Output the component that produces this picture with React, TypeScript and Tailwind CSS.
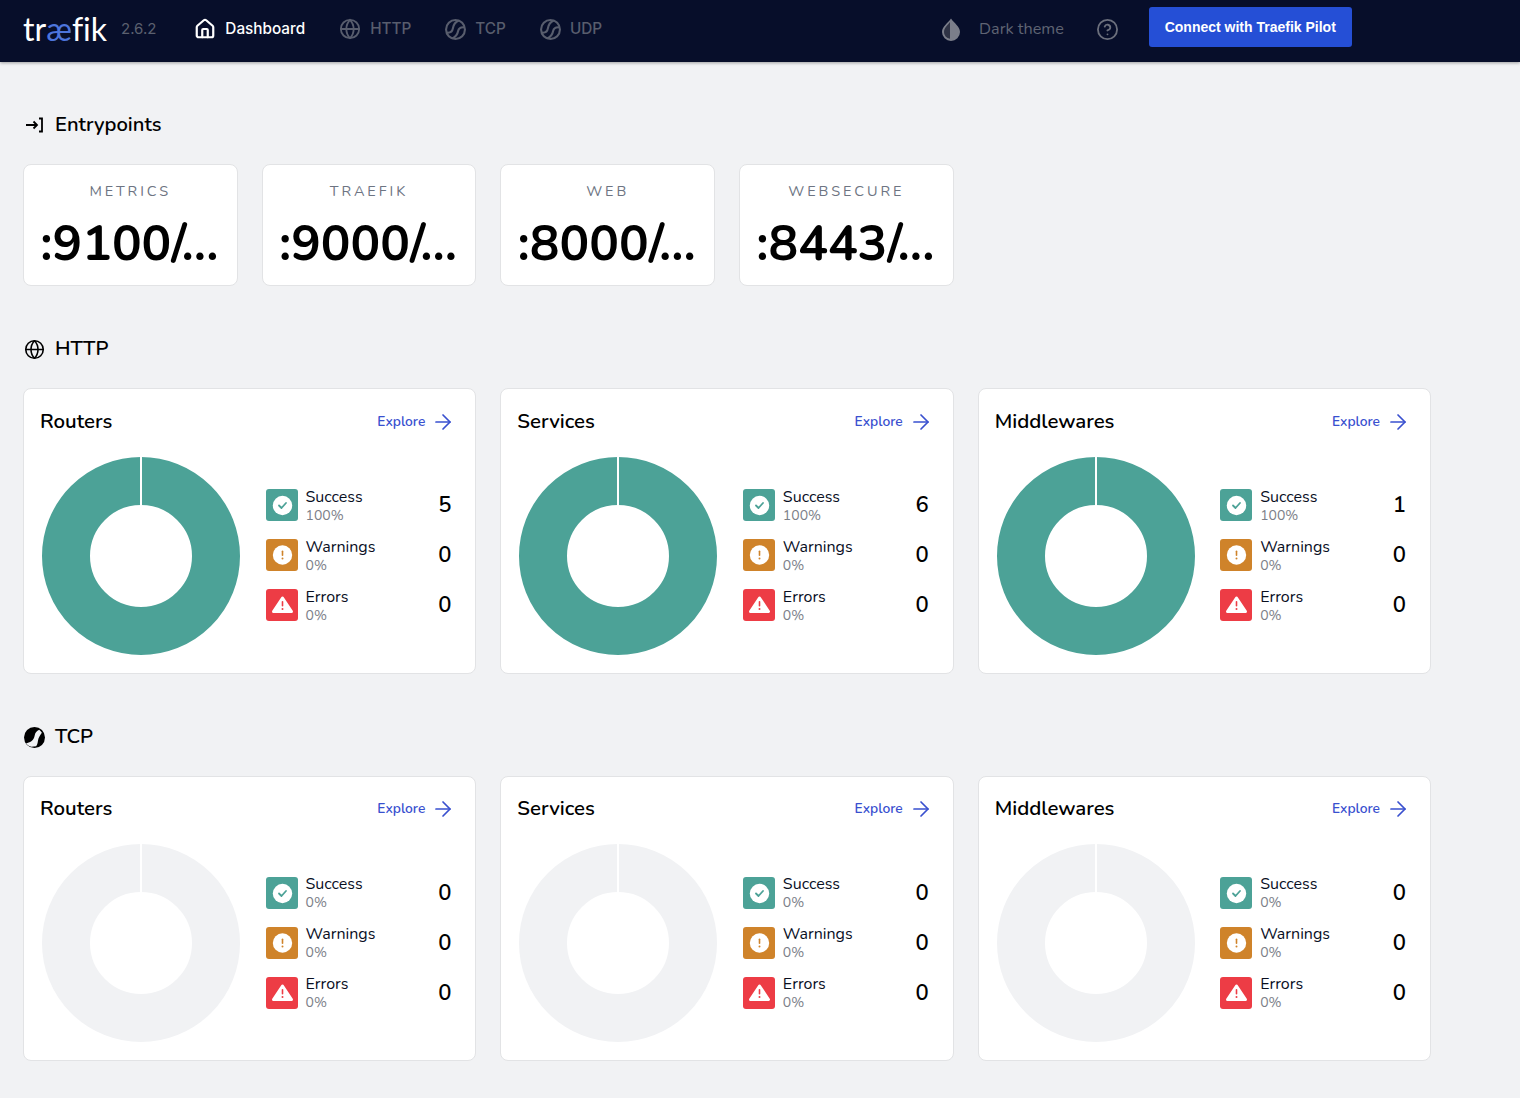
import { ArrowRight, CircleHelp, Globe, House } from "lucide-react";

const font = "font-['Nunito','Open_Sans','Noto_Sans',sans-serif]";

function WaveIcon({ className, solid }: { className?: string; solid?: boolean }) {
  if (solid) {
    return (
      <svg viewBox="0 0 20 20" className={className}>
        <circle cx="10" cy="10" r="10" fill="currentColor" />
        <path d="M14.500 2.500C12 3.800 10.800 5 10.300 7.500 9.700 10.500 8.500 12.500 7 13.500 5.500 14.500 3.500 15 2 15.500 3 17 5 18.300 7 18.800L11.500 18.300C12.500 17 13 15.500 13.300 13 13.700 10.500 14.800 8.500 17 5.500 16.500 4.500 15.500 3.200 14.500 2.500z" fill="#f1f2f4" />
      </svg>
    );
  }
  return (
    <svg viewBox="0 0 20 20" fill="none" stroke="currentColor" strokeWidth="2" className={className}>
      <circle cx="10" cy="10" r="9" />
      <path d="M1.500 13c3.500.5 5.500-1 6-4 .4-2.500 2-6 5.500-7.500" />
      <path d="M7 18.500c2.800-1.200 4.800-3.500 5.500-7 .5-2.500 3-4 6.500-3.500" />
    </svg>
  );
}

function EntryIcon() {
  return (
    <svg viewBox="0 0 20 20" fill="none" stroke="currentColor" strokeWidth="1.8" className="h-5 w-5 shrink-0">
      <path d="M2 10h11M9.500 6.500 13 10l-3.500 3.500" />
      <path d="M15 3.500h3v13h-3" />
    </svg>
  );
}

function NavItem({ label, icon, active }: { label: string; icon: React.ReactNode; active?: boolean }) {
  return (
    <div className={`flex items-center gap-[9px] text-[15.300px] font-['Inter',sans-serif] font-medium ${active ? "text-white" : "text-[#585d6d]"}`}>
      {icon}
      <span>{label}</span>
    </div>
  );
}

function Navbar() {
  return (
    <header className="flex h-[62px] items-center bg-[#070e2a] pb-[4px] shadow-[0_1px_3px_rgba(0,0,0,0.35)]">
      <div className="flex w-[98px] pl-[23px] text-[32px] leading-none text-white font-['Lato',sans-serif] [font-variant-ligatures:none]">
        <span>tr</span>
        <span className="text-[#4d75dc]">æ</span>
        <span>fik</span>
      </div>
      <span className="ml-[23px] text-[15px] text-[#5b606f] font-['Inter',sans-serif]">2.6.2</span>
      <div className="ml-[38px] flex items-center gap-[34px]">
        <NavItem active label="Dashboard" icon={<House className="h-[22px] w-[22px]" strokeWidth={2.4} />} />
        <NavItem label="HTTP" icon={<Globe className="h-[22px] w-[22px]" strokeWidth={2} />} />
        <NavItem label="TCP" icon={<WaveIcon className="h-[21px] w-[21px]" />} />
        <NavItem label="UDP" icon={<WaveIcon className="h-[21px] w-[21px]" />} />
      </div>
      <div className={`ml-[339px] flex items-center gap-[18px] text-[16.200px] text-[#5f6473] ${font}`}>
        <svg viewBox="0 0 20 24" className="h-[24px] w-[20px]">
          <path d="M10 1.500C7 6 1 9.500 1 15a9 9 0 0 0 18 0C19 9.500 13 6 10 1.500z" fill="#7b7e8a" />
          <path d="M9 5C7 8 3 10.500 3 15a6.500 6.500 0 0 0 6 6.800z" fill="#2f3345" />
        </svg>
        <span>Dark theme</span>
      </div>
      <CircleHelp className="ml-[32px] h-[23px] w-[23px] text-[#6b6f7c]" strokeWidth={1.9} />
      <button className="ml-[30px] mb-[4px] h-[40px] w-[203px] rounded-[3px] bg-[#254fd6] text-[14px] font-bold text-white font-['Liberation_Sans',sans-serif]">
        Connect with Traefik Pilot
      </button>
    </header>
  );
}

function SectionTitle({ icon, title }: { icon: React.ReactNode; title: string }) {
  return (
    <div className="flex h-[24px] items-center gap-[10px] text-[20.200px] font-semibold text-black">
      <span className="flex w-[22px] justify-center">{icon}</span>
      <span>{title}</span>
    </div>
  );
}

function EntryCard({ name, value }: { name: string; value: string }) {
  return (
    <div className="flex h-[122px] flex-col items-center rounded-[8px] border border-[#e2e3e5] bg-white pt-[17px]">
      <span className="text-[14.500px] leading-[18px] tracking-[0.2em] text-[#6d7482]">{name}</span>
      <span className="mt-[12px] pr-[2px] text-[49.500px] leading-[64px] font-bold text-black">{value}</span>
    </div>
  );
}

function Donut({ empty }: { empty?: boolean }) {
  const color = empty ? "#f1f2f4" : "#4ca297";
  return (
    <svg viewBox="0 0 198 198" className="h-[198px] w-[198px] shrink-0">
      <circle cx="99" cy="99" r="75" fill="none" stroke={color} strokeWidth="48" />
      <rect x="98" y="0" width="2" height="48" fill="#fff" />
    </svg>
  );
}

function SuccessIcon() {
  return (
    <svg viewBox="0 0 32 32" className="h-8 w-8 shrink-0 rounded-[3px] bg-[#4ca297]">
      <circle cx="16.500" cy="16.500" r="9.700" fill="#fff" />
      <path d="M13 16.500l2.500 2.500 4.500-5" fill="none" stroke="#4ca297" strokeWidth="1.800" strokeLinecap="round" strokeLinejoin="round" />
    </svg>
  );
}

function WarningIcon() {
  return (
    <svg viewBox="0 0 32 32" className="h-8 w-8 shrink-0 rounded-[3px] bg-[#cf832a]">
      <circle cx="16.500" cy="16" r="9.700" fill="#fff" />
      <rect x="15.700" y="11.500" width="1.600" height="5.500" rx="0.800" fill="#cf832a" />
      <circle cx="16.500" cy="19.500" r="1" fill="#cf832a" />
    </svg>
  );
}

function ErrorIcon() {
  return (
    <svg viewBox="0 0 32 32" className="h-8 w-8 shrink-0 rounded-[3px] bg-[#ed3c45]">
      <path d="M16.500 9 25.500 22.500H7.500z" fill="#fff" stroke="#fff" strokeWidth="3" strokeLinejoin="round" />
      <rect x="15.700" y="12" width="1.600" height="5.500" rx="0.800" fill="#ed3c45" />
      <circle cx="16.500" cy="20" r="1" fill="#ed3c45" />
    </svg>
  );
}

function StatRow({ icon, label, pct, value, lower }: { icon: React.ReactNode; label: string; pct: string; value: number; lower?: boolean }) {
  return (
    <div className="flex h-[50px] items-center">
      {icon}
      <div className={`ml-[8px] flex-1 ${lower ? "" : "mt-[2px]"}`}>
        <p className="text-[16px] leading-[19px] text-[#0a0f1f]">{label}</p>
        <p className="text-[14px] leading-[18px] text-[#7c8088]">{pct}</p>
      </div>
      <span className="mr-[2px] text-[22px] font-semibold text-black">{value}</span>
    </div>
  );
}

function StatCard({ title, counts, lower }: { title: string; counts: [number, number, number]; lower?: boolean }) {
  const total = counts[0] + counts[1] + counts[2];
  const pct = (n: number) => (total ? `${Math.round((n / total) * 100)}%` : "0%");
  return (
    <div className={`col-span-2 rounded-[8px] border border-[#e2e3e5] bg-white pl-[16px] pr-[22px] ${lower ? "h-[285px] pt-[20px]" : "h-[286px] pt-[21px]"}`}>
      <div className="flex h-[24px] items-center justify-between">
        <span className="mb-[2px] text-[20.400px] font-semibold text-black">{title}</span>
        <div className="-mr-[2px] flex items-center gap-[6px] text-[13.800px] font-semibold text-[#3950cf]">
          <span>Explore</span>
          <ArrowRight className="h-[24px] w-[24px]" strokeWidth={1.7} />
        </div>
      </div>
      <div className="mt-[23px] flex">
        <div className="ml-[2px]">
          <Donut empty={total === 0} />
        </div>
        <div className={`ml-[25.500px] flex-1 ${lower ? "mt-[24px]" : "mt-[23px]"}`}>
          <StatRow lower={lower} icon={<SuccessIcon />} label="Success" pct={pct(counts[0])} value={counts[0]} />
          <StatRow lower={lower} icon={<WarningIcon />} label="Warnings" pct={pct(counts[1])} value={counts[1]} />
          <StatRow lower={lower} icon={<ErrorIcon />} label="Errors" pct={pct(counts[2])} value={counts[2]} />
        </div>
      </div>
    </div>
  );
}

export default function App() {
  return (
    <div className={`min-h-[1098px] bg-[#f1f2f4] ${font}`}>
      <Navbar />
      <main className="w-[1431px] pl-[23px] pt-[51px]">
        <SectionTitle icon={<EntryIcon />} title="Entrypoints" />
        <div className="mt-[27px] grid grid-cols-6 gap-6">
          <EntryCard name="METRICS" value=":9100/..." />
          <EntryCard name="TRAEFIK" value=":9000/..." />
          <EntryCard name="WEB" value=":8000/..." />
          <EntryCard name="WEBSECURE" value=":8443/..." />
        </div>
        <div className="mt-[51px]">
          <SectionTitle icon={<Globe className="h-[21px] w-[21px]" strokeWidth={1.8} />} title="HTTP" />
        </div>
        <div className="mt-[27px] grid grid-cols-6 gap-6">
          <StatCard title="Routers" counts={[5, 0, 0]} />
          <StatCard title="Services" counts={[6, 0, 0]} />
          <StatCard title="Middlewares" counts={[1, 0, 0]} />
        </div>
        <div className="mt-[51px]">
          <SectionTitle icon={<WaveIcon solid className="h-[21px] w-[21px]" />} title="TCP" />
        </div>
        <div className="mt-[27px] grid grid-cols-6 gap-6">
          <StatCard lower title="Routers" counts={[0, 0, 0]} />
          <StatCard lower title="Services" counts={[0, 0, 0]} />
          <StatCard lower title="Middlewares" counts={[0, 0, 0]} />
        </div>
      </main>
    </div>
  );
}
